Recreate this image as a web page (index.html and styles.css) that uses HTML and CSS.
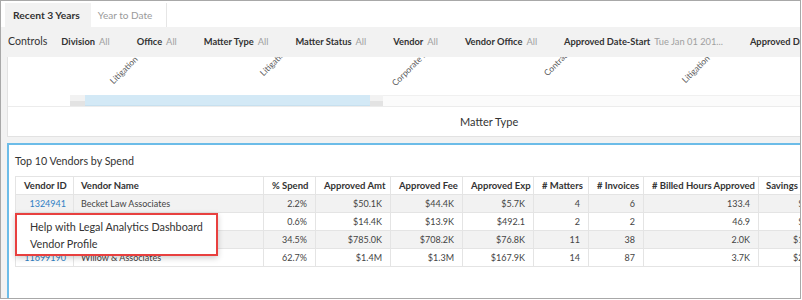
FILE: index.html
```html
<!DOCTYPE html>
<html lang="en">
<head>
<meta charset="utf-8">
<title>Legal Analytics Dashboard</title>
<link rel="stylesheet" href="styles.css">
</head>
<body>
<div class="frame">
  <div class="tabs">
    <div class="tab active">Recent 3 Years</div>
    <div class="tab">Year to Date</div>
  </div>
  <div class="controls">
    <span class="controls-title">Controls</span>
    <span class="ctl"><b>Division</b><span class="val">All</span></span>
    <span class="ctl"><b>Office</b><span class="val">All</span></span>
    <span class="ctl"><b>Matter Type</b><span class="val">All</span></span>
    <span class="ctl"><b>Matter Status</b><span class="val">All</span></span>
    <span class="ctl ctl-vendor"><b>Vendor</b><span class="val">All</span></span>
    <span class="ctl ctl-voffice"><b>Vendor Office</b><span class="val">All</span></span>
    <span class="ctl ctl-date"><b>Approved Date-Start</b><span class="val">Tue Jan 01 201...</span></span>
    <span class="ctl ctl-date2"><b>Approved Date-End</b><span class="val">All</span></span>
  </div>
  <div class="canvas">
    <section class="chart">
      <div class="plot">
        <span class="xlabel xl1">Litigation - Commercial</span>
        <span class="xlabel xl2">Litigation - Employment</span>
        <span class="xlabel xl3">Corporate Law</span>
        <span class="xlabel xl4">Contracts</span>
        <span class="xlabel xl5">Litigation - General</span>
      </div>
      <div class="scrollbar">
        <span class="sb-end"></span>
        <span class="sb-thumb"></span>
        <span class="sb-end sb-end-r"></span>
        <span class="sb-rest"></span>
      </div>
      <div class="axis-title">Matter Type</div>
    </section>
    <section class="vendors">
      <h2 class="vendors-title">Top 10 Vendors by Spend</h2>
      <table class="grid">
        <colgroup>
          <col class="c-id"><col class="c-name"><col class="c-pct"><col class="c-amt"><col class="c-fee"><col class="c-exp"><col class="c-mat"><col class="c-inv"><col class="c-hrs"><col class="c-sav">
        </colgroup>
        <thead>
          <tr>
            <th>Vendor ID</th><th class="left">Vendor Name</th><th>% Spend</th><th>Approved Amt</th><th>Approved Fee</th><th>Approved Exp</th><th># Matters</th><th># Invoices</th><th># Billed Hours Approved</th><th class="left">Savings</th>
          </tr>
        </thead>
        <tbody>
          <tr><td class="link">1324941</td><td class="left">Becket Law Associates</td><td>2.2%</td><td>$50.1K</td><td>$44.4K</td><td>$5.7K</td><td>4</td><td>6</td><td>133.4</td><td>$6.2K</td></tr>
          <tr><td class="link">2058713</td><td class="left">Harper Legal Group</td><td>0.6%</td><td>$14.4K</td><td>$13.9K</td><td>$492.1</td><td>2</td><td>2</td><td>46.9</td><td>$1.8K</td></tr>
          <tr><td class="link">9034412</td><td class="left">Morgan &amp; Field LLP</td><td>34.5%</td><td>$785.0K</td><td>$708.2K</td><td>$76.8K</td><td>11</td><td>38</td><td>2.0K</td><td>$11.3K</td></tr>
          <tr><td class="link">11699190</td><td class="left">Willow &amp; Associates</td><td>62.7%</td><td>$1.4M</td><td>$1.3M</td><td>$167.9K</td><td>14</td><td>87</td><td>3.7K</td><td>$29.4K</td></tr>
        </tbody>
      </table>
      <div class="menu">
        <div class="menu-item">Help with Legal Analytics Dashboard</div>
        <div class="menu-item">Vendor Profile</div>
      </div>
    </section>
  </div>
</div>
</body>
</html>
```
FILE: styles.css
```css
* { box-sizing: border-box; }
html, body { margin: 0; padding: 0; background: #fff; }
body { font-family: "Lato", "Open Sans", sans-serif; color: #333; }

.frame {
  width: 801px;
  height: 299px;
  border: 1px solid #a8a8a8;
  overflow: hidden;
  background: #f2f2f2;
  display: flex;
  flex-direction: column;
}

/* tabs */
.tabs {
  height: 26px;
  flex: none;
  background: #fff;
  display: flex;
  align-items: flex-end;
  padding-left: 4px;
}
.tab {
  height: 24px;
  display: flex;
  align-items: center;
  font-size: 10px;
  color: #9a9a9a;
  padding: 0 14px 0 7px;
  border-right: 1px solid #e6e6e6;
}
.tab.active {
  background: #f2f2f2;
  color: #333;
  font-weight: 700;
  font-size: 10.3px;
  padding: 0 11px 0 8px;
  border-right: none;
}

/* controls */
.controls {
  height: 30px;
  flex: none;
  display: flex;
  align-items: center;
  padding: 0 0 2px 7px;
  white-space: nowrap;
  gap: 27px;
}
.controls-title { font-size: 10.6px; color: #333; margin-right: -13px; }
.ctl { font-size: 9.3px; color: #333; display: flex; gap: 4px; }
.ctl b { font-weight: 700; }
.ctl .val { color: #a0a0a0; }

/* canvas */
.canvas {
  flex: 1;
  overflow: hidden;
  padding-left: 6px;
  display: flex;
  flex-direction: column;
}

.chart {
  flex: none;
  width: 820px;
  height: 110px;
  margin-top: -30px;
  background: #fff;
  border: 1px solid #e2e2e2;
  display: flex;
  flex-direction: column;
}
.plot { height: 67px; position: relative; }
.xlabel {
  position: absolute;
  font-size: 8.5px;
  line-height: 10px;
  color: #5a5a5a;
  white-space: nowrap;
  transform-origin: 0 100%;
  transform: rotate(-45deg);
}
.xl1 { left: 107px; top: 48px; }
.xl2 { left: 257px; top: 40px; }
.xl3 { left: 389px; top: 50px; }
.xl4 { left: 541px; top: 40px; }
.xl5 { left: 679px; top: 47px; }

.scrollbar {
  height: 12px;
  display: flex;
  padding-left: 62px;
  border-bottom: 1px solid #ececec;
}
.sb-end {
  width: 15px;
  background: linear-gradient(#f2f2f2 50%, #e3e3e3 50%);
}
.sb-end-r { width: 13px; }
.sb-thumb {
  width: 285px;
  background: #d3e9f6;
  border-bottom: 1px solid #c7e0ef;
}
.sb-rest {
  flex: 1;
  background: #fbfbfb;
  border-top: 1px solid #f0f0f0;
}

.axis-title {
  flex: 1;
  display: flex;
  align-items: center;
  padding-left: 452px;
  font-size: 11px;
  color: #333;
}

/* vendors table panel */
.vendors {
  flex: none;
  position: relative;
  width: 840px;
  height: 200px;
  margin-top: 6px;
  background: #fff;
  border: 2px solid #6cbce8;
  padding: 7px 0 0 6px;
}
.vendors-title {
  margin: 0 0 6px;
  font-size: 10.7px;
  font-weight: 400;
  line-height: 18px;
  color: #333;
}
.grid {
  border-collapse: collapse;
  table-layout: fixed;
  width: 815px;
  font-size: 9px;
  color: #444;
}
.c-id { width: 58px; }
.c-name { width: 190px; }
.c-pct { width: 52px; }
.c-amt { width: 75px; }
.c-fee { width: 72px; }
.c-exp { width: 71px; }
.c-mat { width: 55px; }
.c-inv { width: 55px; }
.c-hrs { width: 115px; }
.c-sav { width: 72px; }

.grid th, .grid td {
  height: 18px;
  padding: 0 8px;
  border: 1px solid #e4e4e4;
  white-space: nowrap;
  overflow: hidden;
}
.grid th {
  font-weight: 700;
  font-size: 9.5px;
  text-align: center;
  color: #333;
  background: #fff;
}
.grid td { text-align: right; }
.grid th.left, .grid td.left { text-align: left; padding-left: 7px; }
.grid td.link { color: #2f7fc4; padding-right: 7px; }
.grid tbody tr:nth-child(odd) td { background: #f2f2f2; }

.menu {
  position: absolute;
  left: 6px;
  top: 68px;
  width: 203px;
  height: 43px;
  background: #fff;
  border: 2px solid #e8403f;
  box-shadow: 0 2px 6px rgba(0, 0, 0, 0.2);
  padding: 3px 0 0 13px;
}
.menu-item {
  font-size: 10.8px;
  line-height: 17px;
  color: #333;
  white-space: nowrap;
}
```
